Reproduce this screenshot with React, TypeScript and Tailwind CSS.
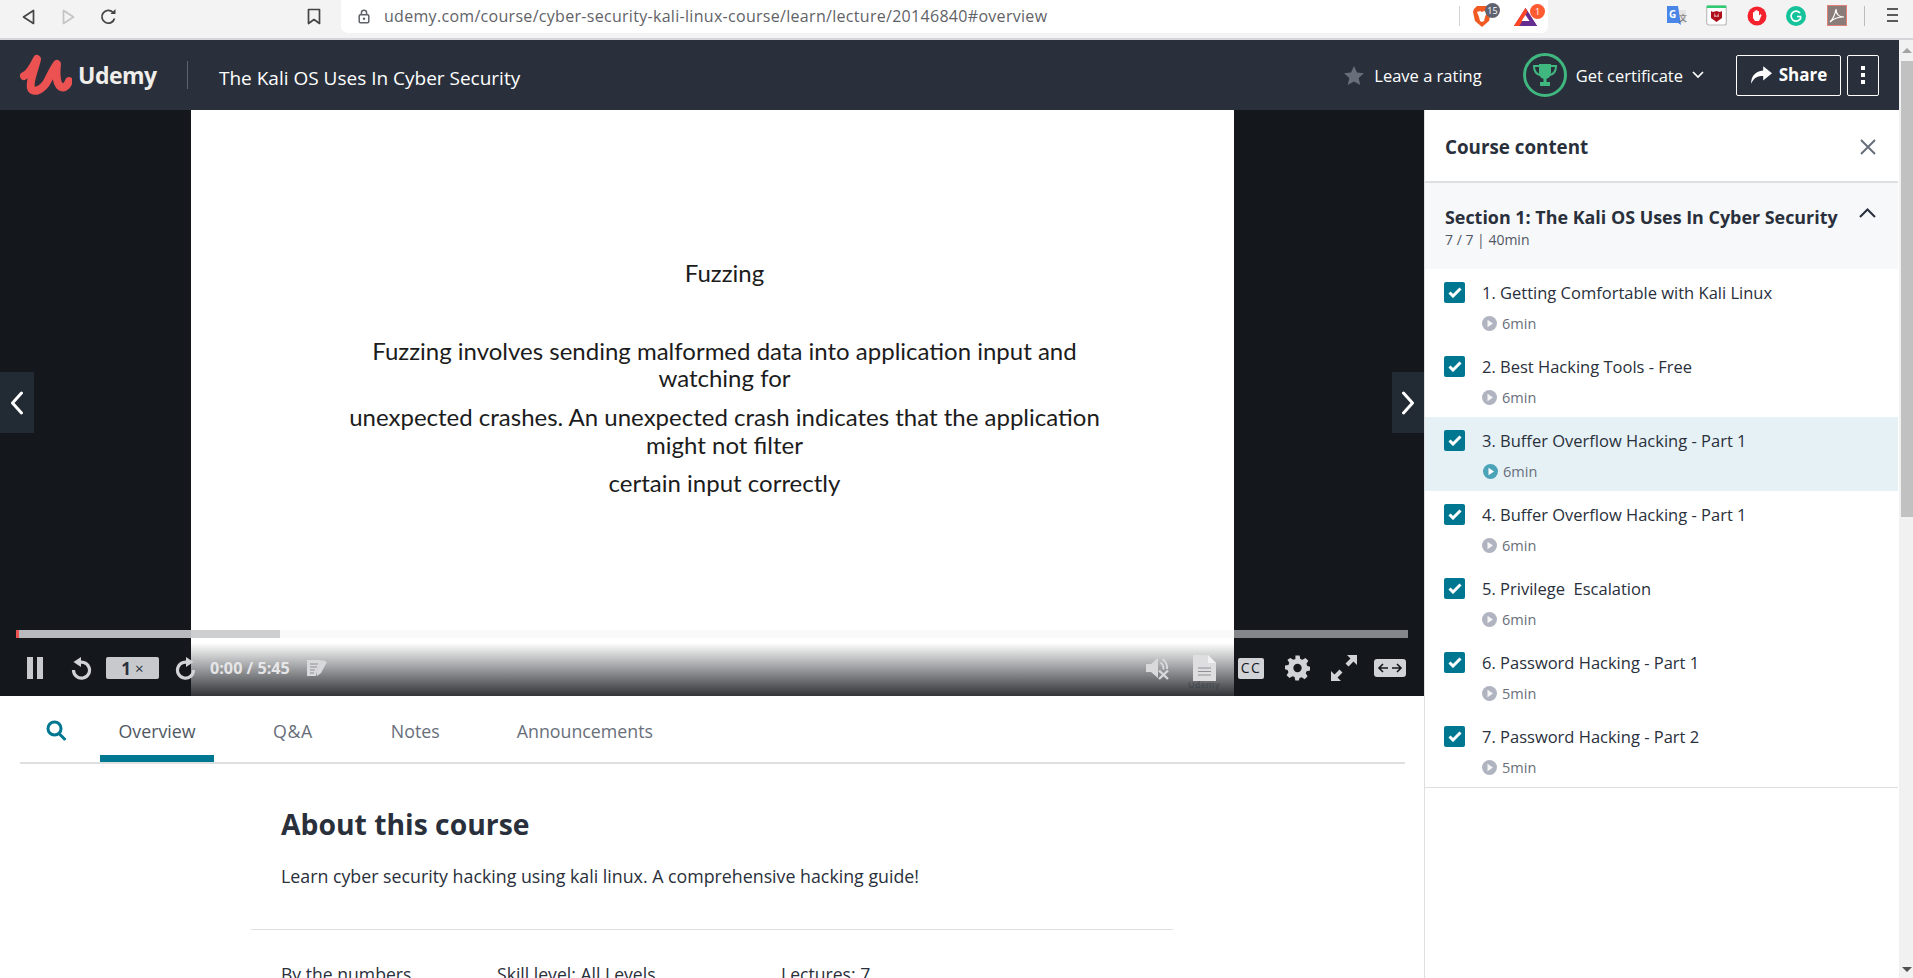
import React from "react";

const rows = [
  ["1. Getting Comfortable with Kali Linux", "6min"],
  ["2. Best Hacking Tools - Free", "6min"],
  ["3. Buffer Overflow Hacking - Part 1", "6min"],
  ["4. Buffer Overflow Hacking - Part 1", "6min"],
  ["5. Privilege  Escalation", "6min"],
  ["6. Password Hacking - Part 1", "5min"],
  ["7. Password Hacking - Part 2", "5min"],
];

function BrowserBar() {
  return (
    <div className="h-[40px] shrink-0 bg-[#f3f3f3] border-b-2 border-[#d4d6d9] flex items-start relative">
      <div className="w-[341px] h-[33px] flex items-center relative shrink-0">
        <svg className="ml-[22px]" width="13" height="16" viewBox="0 0 13 16" fill="none" stroke="#444" strokeWidth="1.7" strokeLinejoin="round"><path d="M11.5 1.5v13L1.5 8z" /></svg>
        <svg className="ml-[27px]" width="13" height="16" viewBox="0 0 13 16" fill="none" stroke="#c4c4c4" strokeWidth="1.7" strokeLinejoin="round"><path d="M1.5 1.5v13l10-6.5z" /></svg>
        <svg className="ml-[25px]" width="17" height="17" viewBox="0 0 17 17" fill="none" stroke="#444" strokeWidth="1.8"><path d="M14.5 10.5a6.4 6.4 0 1 1-1.6-6.2" /><path d="M15.5 1v5h-5z" fill="#444" stroke="none" /></svg>
        <svg className="ml-[190px]" width="14" height="17" viewBox="0 0 14 17" fill="none" stroke="#444" strokeWidth="1.7" strokeLinejoin="round"><path d="M1.5 1.5h11v14L7 11.5l-5.5 4z" /></svg>
      </div>
      <div className="w-[1207px] h-[33px] bg-white rounded-b-[7px] flex items-center relative shrink-0">
        <svg className="ml-[17px]" width="12" height="15" viewBox="0 0 12 15" fill="none"><rect x="1.2" y="5.8" width="9.6" height="8" rx="1.2" stroke="#5f6368" strokeWidth="1.5" /><path d="M3.4 5.8V3.8a2.6 2.6 0 0 1 5.2 0v2" stroke="#5f6368" strokeWidth="1.5" /><circle cx="6" cy="9.8" r="1.2" fill="#5f6368" /></svg>
        <span className="ml-[14px] -mt-[1px] text-[16px] text-[#5f6368] font-['Open_Sans',sans-serif] tracking-[0.3px] whitespace-nowrap">udemy.com/course/cyber-security-kali-linux-course/learn/lecture/20146840#overview</span>
        <div className="absolute left-[1118px] top-[6px] w-px h-[20px] bg-[#d5d5d5]" />
        <svg className="absolute left-[1131px] top-[5px]" width="20" height="23" viewBox="0 0 20 23"><path d="M5 1h10l3 3 1 3-2 9-7 6-7-6-2-9 1-3z" fill="#f15a22" /><path d="M5 7l3-1 2 1 2-1 3 1-2 5-1 4-2 1-2-1-1-4z" fill="#fff" /></svg>
        <span className="absolute left-[1144px] top-[3px] w-[15px] h-[15px] rounded-full bg-[#5f6270] text-white text-[9px] font-['Open_Sans',sans-serif] flex items-center justify-center">15</span>
        <svg className="absolute left-[1173px] top-[8px]" width="23" height="18" viewBox="0 0 23 18"><path d="M11.5 0L23 18H0z" fill="#9e1f63" /><path d="M11.5 0L23 18h-6L11.5 8z" fill="#662d91" /><path d="M0 18l4-5h15l4 5z" fill="#662d91" /><path d="M0 18L11.5 0l2 3.5L5.5 18z" fill="#ff4724" /><path d="M11.5 7l-4 6h8z" fill="#fff" /></svg>
        <span className="absolute left-[1189px] top-[4px] w-[15px] h-[15px] rounded-full bg-[#ff5a30] text-white text-[9px] font-['Open_Sans',sans-serif] flex items-center justify-center">1</span>
      </div>
      <svg className="absolute left-[1666px] top-[5px]" width="21" height="22" viewBox="0 0 21 22"><rect x="8" y="5" width="12" height="13" fill="#e4e4e4" /><path d="M1 1h11l3 19-3-2H1z" fill="#4a86e8" /><text x="3" y="13" fontSize="10" fontWeight="700" fill="#fff" fontFamily="Open Sans">G</text><text x="13" y="16" fontSize="8" fill="#666" fontFamily="Noto Sans CJK SC">文</text></svg>
      <svg className="absolute left-[1706px] top-[5px]" width="21" height="21" viewBox="0 0 21 21"><rect x="0.7" y="1" width="19.6" height="19" rx="2" fill="#fff" stroke="#bbb" strokeWidth="1.2" /><rect x="0.7" y="0.5" width="19.6" height="2.5" fill="#2ecc71" /><path d="M5 6l2 1 3.500-1 3.500 1 2-1v7l-5.500 4L5 13z" fill="#b0101c" /><path d="M8 8l2.500 3L13 8v4h-5z" fill="#fff" opacity=".5" /></svg>
      <svg className="absolute left-[1747px] top-[6px]" width="20" height="20" viewBox="0 0 20 20"><circle cx="10" cy="10" r="9.500" fill="#f5222d" /><path d="M6 9V6.500a.8.8 0 0 1 1.500 0V5a.8.8 0 0 1 1.500 0V4.500a.8.8 0 0 1 1.500 0V5.500a.8.8 0 0 1 1.500 0v4l1-1a.9.9 0 0 1 1.300 1.200L12 15H8l-2-3z" fill="#fff" /></svg>
      <svg className="absolute left-[1786px] top-[6px]" width="20" height="20" viewBox="0 0 20 20"><circle cx="10" cy="10" r="10" fill="#15c39a" /><path d="M14 7a5 5 0 1 0 0 6.200M14.500 13.500V10.500H11" fill="none" stroke="#fff" strokeWidth="1.700" /></svg>
      <svg className="absolute left-[1827px] top-[5px]" width="20" height="21" viewBox="0 0 20 21"><rect x="0.500" y="0.500" width="19" height="20" fill="#8a7c78" stroke="#e08078" /><path d="M3 17c3-3 5-7 6-13 0 5 3 8 8 8-5 0-10 1-14 5z" fill="none" stroke="#fff" strokeWidth="1.200" /></svg>
      <div className="absolute left-[1864px] top-[6px] w-px h-[20px] bg-[#bdbdbd]" />
      <div className="absolute left-[1887px] top-[8px] w-[11px] flex flex-col gap-[4px]">
        <div className="h-[2px] bg-[#5a5a5a]" />
        <div className="h-[2px] bg-[#5a5a5a]" />
        <div className="h-[2px] bg-[#5a5a5a]" />
      </div>
    </div>
  );
}

function Header() {
  return (
    <header className="h-[70px] shrink-0 bg-[#29303b] flex items-center font-['Open_Sans',sans-serif] text-white">
      <svg className="ml-[20px] shrink-0" width="52" height="42" viewBox="0 0 52 42" fill="none" stroke="#ec5252" strokeWidth="8" strokeLinecap="round" strokeLinejoin="round"><path d="M4 22C9 20 14 11 17 5C15 15 9 27 11 34C13 40 23 36 28 26C31 20 34 14 37 10C36 18 36 30 41 33C45 35 48 30 49 27" /></svg>
      <span className="ml-[6px] w-[109px] text-[23px] font-bold text-[#f0eeea] tracking-[-0.5px]">Udemy</span>
      <div className="w-px h-[28px] bg-[#5d6470]" />
      <span className="ml-[31px] pt-[6px] text-[19px] whitespace-nowrap">The Kali OS Uses In Cyber Security</span>
      <div className="ml-auto flex items-center">
        <svg width="20" height="19" viewBox="0 0 24 23" fill="#686f7a"><path d="M12 0l3.600 8 8.400.8-6.300 5.700 1.800 8.500L12 18.700 4.500 23l1.800-8.500L0 8.800 8.400 8z" /></svg>
        <span className="ml-[10px] pt-[2px] text-[16.500px] whitespace-nowrap">Leave a rating</span>
        <div className="ml-[41px] w-[44px] h-[44px] rounded-full border-[3px] border-[#3fb77f] flex items-center justify-center">
          <svg width="26" height="26" viewBox="0 0 26 26" fill="#3fb77f"><path d="M7 2h12v9a6 6 0 0 1-12 0z" /><path d="M7 4H2c0 5 2 8 6 9M19 4h5c0 5-2 8-6 9" fill="none" stroke="#3fb77f" strokeWidth="2" /><path d="M11.500 16h3v4h-3zM8 20h10v4H8z" /></svg>
        </div>
        <span className="ml-[9px] pt-[2px] text-[16.500px] whitespace-nowrap">Get certificate</span>
        <svg className="ml-[9px]" width="12" height="8" viewBox="0 0 12 8" fill="none" stroke="#fff" strokeWidth="1.700"><path d="M1 1l5 5 5-5" /></svg>
        <button className="ml-[32px] w-[105px] h-[41px] border border-white rounded-[2px] flex items-center justify-center gap-[7px] text-[17px] font-bold">
          <svg width="22" height="18" viewBox="0 0 20 16" fill="#fff"><path d="M12 0l8 6.500L12 13V9C7 9 3.500 10.500 1 16 1 9 5 4.500 12 4z" /></svg>
          Share
        </button>
        <button className="ml-[6px] mr-[20px] w-[32px] h-[41px] border border-white rounded-[2px] flex flex-col items-center justify-center gap-[3px]">
          <span className="w-[4px] h-[4px] bg-white" />
          <span className="w-[4px] h-[4px] bg-white" />
          <span className="w-[4px] h-[4px] bg-white" />
        </button>
      </div>
    </header>
  );
}

function NavArrow({ right }: { right?: boolean }) {
  return (
    <div className={right ? "absolute right-0 top-[262px] w-[32px] h-[61px] bg-[#222a33] flex items-center justify-center" : "absolute left-0 top-[262px] w-[34px] h-[61px] bg-[#222a33] flex items-center justify-center"}>
      <svg width="14" height="24" viewBox="0 0 14 24" fill="none" stroke="#fff" strokeWidth="3" strokeLinecap="round" strokeLinejoin="round"><path d={right ? "M2.500 2l9 10-9 10" : "M11.500 2l-9 10 9 10"} /></svg>
    </div>
  );
}

function Controls() {
  const c = "#d2d3d6";
  return (
    <div className="absolute left-0 right-0 bottom-0 h-[76px] bg-gradient-to-b from-transparent from-[30%] to-[#14171ce0]">
      <div className="absolute left-[16px] top-[10px] w-[1392px] h-[8px] bg-[#f5f5f580]">
        <div className="w-[264px] h-full bg-[#c4c6c8d1]">
          <div className="w-[3px] h-full bg-[#ec5252]" />
        </div>
      </div>
      <div className="absolute left-0 right-0 top-[36px] h-[24px] flex items-center">
        <div className="ml-[27px] w-[16px] h-[22px] flex justify-between">
          <div className="w-[6px] h-full bg-[#c9cacd]" />
          <div className="w-[6px] h-full bg-[#c9cacd]" />
        </div>
        <svg className="ml-[28px]" width="21" height="23" viewBox="0 0 21 23" fill="none" stroke={c} strokeWidth="3.200"><path d="M6 6.500a8 8 0 1 1-3.500 6.500" /><path d="M10 0v10L2.500 5z" fill={c} stroke="none" /></svg>
        <div className="ml-[14px] w-[53px] h-[22px] rounded-[2px] bg-[#c8c9cc] flex items-center justify-center gap-[4px] font-['Open_Sans',sans-serif] text-[#29303b] font-bold text-[17px] leading-none">1<span className="text-[15px] font-normal">×</span></div>
        <svg className="ml-[16px]" width="21" height="23" viewBox="0 0 21 23" fill="none" stroke={c} strokeWidth="3.200"><path d="M15 6.500a8 8 0 1 0 3.500 6.500" /><path d="M11 0v10l7.500-5z" fill={c} stroke="none" /></svg>
        <span className="ml-[14px] text-[16.200px] font-bold text-[#e6e6e8] font-['Open_Sans',sans-serif] whitespace-nowrap">0:00 / 5:45</span>
        <svg className="ml-[17px]" width="21" height="17" viewBox="0 0 21 17"><path d="M0 0h14v3l-4 8-1 5H0z" fill="#d9d9dc" /><path d="M3 4h8M3 7h7M3 10h5M3 13h4" stroke="#8f8f94" strokeWidth="1" /><path d="M15 0l5 2-6 11-4 3 0-5z" fill="#d9d9dc" /></svg>
        <svg className="ml-auto" width="24" height="24" viewBox="0 0 24 24" fill="#d9d9dc"><path d="M0 8h5l7-6v20l-7-6H0z" /><path d="M14.500 6.500a8 8 0 0 1 3 7M16.500 3a11 11 0 0 1 4.500 10" fill="none" stroke="#d9d9dc" strokeWidth="2" /><path d="M13 14.500l9 8.500M22 14.500L13 23" stroke="#d9d9dc" strokeWidth="2.400" /></svg>
        <svg className="ml-[23px]" width="23" height="26" viewBox="0 0 23 26"><path d="M0 0h15l8 8v18H0z" fill="#dedee0" /><path d="M15 0l8 8h-8z" fill="#f2f2f3" /><path d="M5 13h13M5 16.500h13M5 20h13" stroke="#8f8f94" strokeWidth="1.200" /></svg>
        <div className="ml-[22px] w-[26px] h-[21px] rounded-[2px] bg-[#d2d3d6] flex items-center justify-center text-[#14171c] font-['Open_Sans',sans-serif] text-[14px] leading-none tracking-[1.500px]">CC</div>
        <svg className="ml-[21px]" width="25" height="26" viewBox="0 0 24 24" fill={c}><path fillRule="evenodd" d="M10 0h4l.7 3.300 2 .8L19.600 2.300l2.800 2.800-1.800 2.900.8 2L24 10.700v3.600l-3.300.7-.8 2 1.800 2.900-2.800 2.800-2.900-1.800-2 .8L13.300 24h-3.400l-.7-3.300-2-.8-2.900 1.800-2.800-2.800 1.800-2.900-.8-2L0 13.300v-3.600l3.300-.7.800-2L2.300 4.100 5.100 2.300 8 4.100l2-.8zM12 8a4 4 0 1 0 0 8 4 4 0 0 0 0-8z" /></svg>
        <svg className="ml-[21px]" width="26" height="26" viewBox="0 0 26 26" fill={c}><path d="M16 0h10v10l-3.500-3.500-5 5-3-3 5-5zM0 26V16l3.500 3.500 5-5 3 3-5 5L10 26z" /></svg>
        <div className="ml-[17px] mr-[18px] w-[32px] h-[18px] rounded-[3px] bg-[#d2d3d6] flex items-center justify-center">
          <svg width="26" height="12" viewBox="0 0 26 12" fill="none" stroke="#14171c" strokeWidth="1.600"><path d="M11 6H2M6 2L2 6l4 4M15 6h9M20 2l4 4-4 4" /></svg>
        </div>
      </div>
      <span className="absolute left-[1188px] top-[58px] text-[9px] font-bold text-[#29303b60] font-['Open_Sans',sans-serif]">Udemy</span>
    </div>
  );
}

function Video() {
  return (
    <div className="relative h-[586px] bg-[#14171c] flex justify-center shrink-0">
      <div className="w-[1043px] h-full bg-white flex flex-col items-center font-['Lato',sans-serif] text-[24px] text-[#1c1c1c] leading-[28px] text-center pt-[149px] pl-[25px]">
        <div>Fuzzing</div>
        <div className="mt-[50px]">Fuzzing involves sending malformed data into application input and</div>
        <div className="-mt-[1px]">watching for</div>
        <div className="mt-[11px]">unexpected crashes. An unexpected crash indicates that the application</div>
        <div>might not filter</div>
        <div className="mt-[10px]">certain input correctly</div>
      </div>
      <NavArrow />
      <NavArrow right />
      <Controls />
    </div>
  );
}

function Tabs() {
  return (
    <div className="ml-[20px] w-[1385px] h-[68px] border-b-2 border-[#dedfe0] flex items-end shrink-0 font-['Open_Sans',sans-serif] text-[#686f7a] text-[17.800px]">
      <div className="w-[80px] h-full flex items-start pl-[26px] pt-[24px]">
        <svg width="20" height="21" viewBox="0 0 20 21" fill="none" stroke="#007791" strokeWidth="3" strokeLinecap="round"><circle cx="8.500" cy="8.500" r="6.500" /><path d="M13.500 14l5 5" /></svg>
      </div>
      <div className="w-[114px] h-full flex items-center justify-center pt-[12px] border-b-[7px] border-[#007791] text-[#505763] box-border">Overview</div>
      <div className="ml-[40px] px-[19px] h-full flex items-center pt-[5px] tracking-[0.6px]">Q&amp;A</div>
      <div className="ml-[40px] px-[19px] h-full flex items-center pt-[5px]">Notes</div>
      <div className="ml-[39px] px-[19px] h-full flex items-center pt-[5px]">Announcements</div>
    </div>
  );
}

function About() {
  return (
    <div className="ml-[251px] w-[922px] font-['Open_Sans',sans-serif] text-[#29303b]">
      <h2 className="pl-[30px] pt-[41px] text-[28.300px] font-bold leading-[38px]">About this course</h2>
      <p className="pl-[30px] mt-[21px] text-[17.800px] leading-[24px] text-[#29303b]">Learn cyber security hacking using kali linux. A comprehensive hacking guide!</p>
      <div className="mt-[41px] h-px bg-[#dedfe0]" />
      <div className="pl-[30px] mt-[32px] flex text-[17.600px] leading-[24px]">
        <span className="w-[216px]">By the numbers</span>
        <span className="w-[284px]">Skill level: All Levels</span>
        <span>Lectures: 7</span>
      </div>
    </div>
  );
}

function Row({ title, time, active }: { title: string; time: string; active: boolean }) {
  return (
    <div className={active ? "h-[74px] bg-[#e6f1f6] flex pl-[19px] pt-[13px]" : "h-[74px] flex pl-[19px] pt-[13px]"}>
      <div className="w-[21px] h-[21px] rounded-[2px] bg-[#007791] flex items-center justify-center shrink-0">
        <svg width="14" height="11" viewBox="0 0 14 11" fill="none" stroke="#fff" strokeWidth="3"><path d="M1.500 5.500l3.500 3.500 7.500-7.500" /></svg>
      </div>
      <div className="ml-[17px]">
        <div className="text-[16.500px] leading-[22px] text-[#29303b] whitespace-pre">{title}</div>
        <div className="flex items-center mt-[12px] h-[15px]">
          <svg className={active ? "ml-[1px]" : ""} width="15" height="15" viewBox="0 0 15 15"><circle cx="7.500" cy="7.500" r="7.500" fill={active ? "#4ba3b8" : "#b0b4c0"} /><path d="M5.500 3.800l5.500 3.700-5.500 3.700z" fill={active ? "#fff" : "#f5f5f5"} /></svg>
          <span className="ml-[5px] text-[14.500px] text-[#686f7a]">{time}</span>
        </div>
      </div>
    </div>
  );
}

function Sidebar() {
  return (
    <aside className="w-[474px] shrink-0 border-l border-[#dedfe0] font-['Open_Sans',sans-serif]">
      <div className="h-[73px] border-b-2 border-[#dedfe0] flex items-center pl-[20px] pr-[22px] justify-between pt-[3px]">
        <span className="text-[18.800px] font-bold text-[#29303b]">Course content</span>
        <svg className="-mt-[1px]" width="16" height="16" viewBox="0 0 16 16" stroke="#686f7a" strokeWidth="2"><path d="M1 1l14 14M15 1L1 15" /></svg>
      </div>
      <div className="h-[86px] bg-[#f7f8fa] pl-[20px] pr-[22px] pt-[22px] flex justify-between">
        <div>
          <div className="text-[17.900px] leading-[24px] font-bold text-[#29303b] whitespace-nowrap">Section 1: The Kali OS Uses In Cyber Security</div>
          <div className="text-[14px] leading-[20px] text-[#505763] mt-[1px]">7 / 7 | 40min</div>
        </div>
        <svg className="mt-[3px]" width="17" height="10" viewBox="0 0 17 10" fill="none" stroke="#29303b" strokeWidth="2"><path d="M1 9l7.500-7.500L16 9" /></svg>
      </div>
      {rows.map((r, i) => (
        <Row key={i} title={r[0]} time={r[1]} active={i === 2} />
      ))}
      <div className="h-px bg-[#dedfe0]" />
    </aside>
  );
}

function Scrollbar() {
  return (
    <div className="w-[14px] shrink-0 bg-[#f1f1f1] flex flex-col items-center relative">
      <div className="h-[21px] w-full flex items-center justify-center pl-[2px]">
        <div className="w-0 h-0 border-l-[5px] border-r-[5px] border-b-[5px] border-l-transparent border-r-transparent border-b-[#a3a3a3]" />
      </div>
      <div className="ml-[2px] w-[12px] h-[456px] bg-[#c1c1c1]" />
      <div className="mt-auto h-[17px] w-full flex items-center justify-center pl-[2px]">
        <div className="w-0 h-0 border-l-[5px] border-r-[5px] border-t-[5px] border-l-transparent border-r-transparent border-t-[#505050]" />
      </div>
    </div>
  );
}

export default function App() {
  return (
    <div className="w-[1913px] h-[978px] overflow-hidden flex flex-col bg-white">
      <BrowserBar />
      <div className="flex-1 flex min-h-0">
        <div className="w-[1899px] flex flex-col shrink-0">
          <Header />
          <div className="flex flex-1 min-h-0">
            <main className="w-[1424px] shrink-0 flex flex-col overflow-hidden">
              <Video />
              <Tabs />
              <About />
            </main>
            <Sidebar />
          </div>
        </div>
        <Scrollbar />
      </div>
    </div>
  );
}
